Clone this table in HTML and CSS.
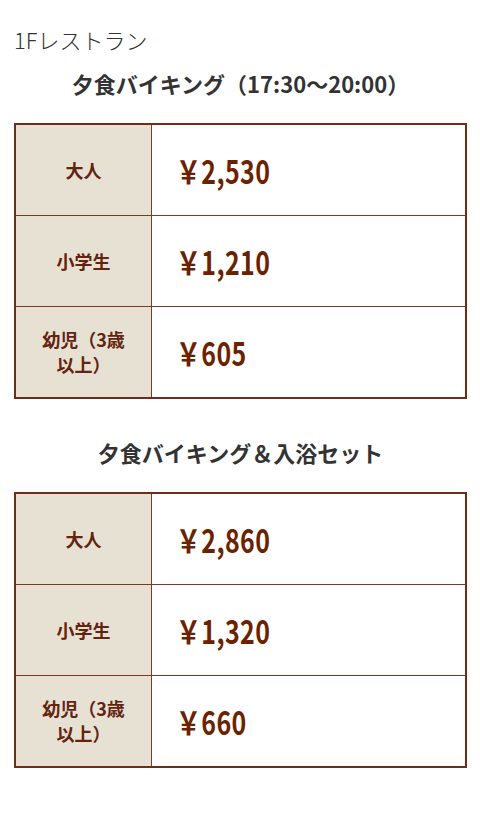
FILE: index.html
```html
<!DOCTYPE html>
<html lang="ja">
<head>
<meta charset="utf-8">
<link rel="stylesheet" href="styles.css">
</head>
<body>
<div class="page">
  <h2 class="place">1Fレストラン</h2>
  <h3 class="title">夕食バイキング（17:30〜20:00）</h3>
  <table class="price">
    <tr><th>大人</th><td><span class="yen">￥2,530</span></td></tr>
    <tr><th>小学生</th><td><span class="yen">￥1,210</span></td></tr>
    <tr><th>幼児（3歳<br>以上）</th><td><span class="yen">￥605</span></td></tr>
  </table>
  <h3 class="title second">夕食バイキング＆入浴セット</h3>
  <table class="price">
    <tr><th>大人</th><td><span class="yen">￥2,860</span></td></tr>
    <tr><th>小学生</th><td><span class="yen">￥1,320</span></td></tr>
    <tr><th>幼児（3歳<br>以上）</th><td><span class="yen">￥660</span></td></tr>
  </table>
</div>
</body>
</html>
```
FILE: styles.css
```css
html, body {
  margin: 0;
  padding: 0;
  background: #fff;
}
body {
  font-family: "Noto Sans CJK JP", "Noto Sans", sans-serif;
  color: #333;
}
.page {
  padding: 24px 13px 0 14px;
}
.place {
  margin: 0;
  font-size: 22px;
  font-weight: 300;
  line-height: 30px;
  color: #333;
}
.title {
  margin: 14px 0 0;
  text-align: center;
  font-size: 22px;
  font-weight: 700;
  line-height: 30px;
  color: #333;
}
.title.second {
  margin-top: 38px;
}
.price {
  width: 453px;
  margin-top: 25px;
  border-collapse: collapse;
  border: 2px solid #6f2c17;
}
.price th, .price td {
  border: 1.5px solid #7a3a26;
  height: 90px;
  padding: 0;
}
.price th {
  width: 135px;
  background: #e7e1d4;
  color: #62230f;
  font-size: 18px;
  font-weight: 700;
  line-height: 25px;
  text-align: center;
}
.price td {
  padding-left: 24px;
  text-align: left;
  color: #6a2200;
}
.yen {
  display: inline-block;
  font-size: 32px;
  font-weight: 700;
  line-height: 40px;
  transform: scaleX(0.78);
  transform-origin: left center;
  letter-spacing: 0.5px;
}
```
